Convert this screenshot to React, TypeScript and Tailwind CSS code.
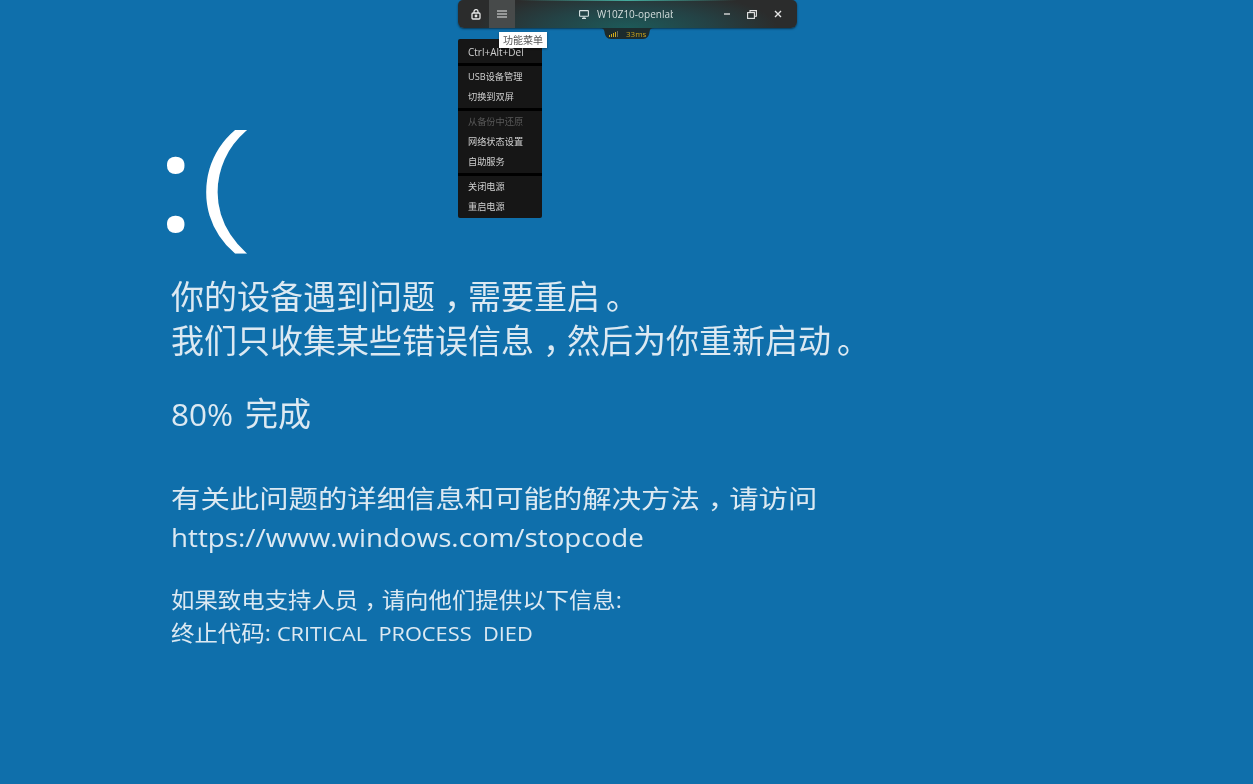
import React from "react";

const cjk = "font-['Open_Sans','Noto_Sans_CJK_SC',sans-serif]";

function Comma() {
  return <span className="inline-block translate-x-[0.27em]">，</span>;
}

function Stop() {
  return <span className="inline-block translate-x-[0.18em]">。</span>;
}

function MenuItem({ label, disabled, latin }: { label: string; disabled?: boolean; latin?: boolean }) {
  return (
    <div className={`h-[20px] pl-[10px] leading-[20px] whitespace-nowrap ${latin ? "text-[10px]" : "text-[9.2px]"} ${disabled ? "text-[#5a5a5a]" : "text-[#d0d0d0]"}`}>
      {label}
    </div>
  );
}

function Sep() {
  return <div className="my-[1px] h-[3px] bg-black" />;
}

function Toolbar() {
  return (
    <div className="absolute left-[458px] top-0 w-[339px]">
      <div className="relative flex h-[28px] items-center rounded-b-[6px] rounded-t-[5px] bg-[radial-gradient(ellipse_150px_38px_at_50%_100%,#1d5a59_0%,#244245_55%,#2b2c2c_100%)] shadow-[0_1px_2px_rgba(0,0,0,0.5)] [filter:blur(0.3px)]">
        <div className="absolute inset-x-[60px] top-0 h-[1px] bg-gradient-to-r from-transparent via-[#45ab9d] to-transparent" />
        <div className="flex h-full w-[31px] items-center justify-center pl-[4px]">
          <svg width="10" height="11" viewBox="0 0 10 11" fill="none" stroke="#e6e6e6" strokeWidth="1.3">
            <path d="M3 4V2.6a2 2 0 0 1 4 0V4" />
            <rect x="1" y="4" width="8" height="6" rx="1" />
            <circle cx="5" cy="7" r="0.8" fill="#e6e6e6" />
          </svg>
        </div>
        <div className="flex h-full w-[26px] items-center justify-center bg-[#474a4a]">
          <svg width="10" height="8" viewBox="0 0 10 8" stroke="#e8e8e8" strokeWidth="1.2">
            <path d="M0 1h10M0 4h10M0 7h10" />
          </svg>
        </div>
        <div className="flex h-full w-[184px] items-center pl-[64px]">
          <svg width="10" height="9" viewBox="0 0 10 9" fill="none" stroke="#d8e4e4" strokeWidth="1.1" className="mr-[8px] shrink-0">
            <rect x="0.6" y="0.6" width="8.8" height="5.6" rx="0.5" />
            <path d="M3 8.4h4M5 6.4v2" />
          </svg>
          <span className="w-[75.5px] overflow-hidden whitespace-nowrap font-['Open_Sans',sans-serif] text-[10px] text-[#d4dedd]">W10Z10-openlab</span>
        </div>
        <div className="flex h-full flex-1 items-center pl-[24px]">
          <svg width="8" height="8" viewBox="0 0 8 8" stroke="#e6e6e6" strokeWidth="1.3"><path d="M1 4h6" /></svg>
          <svg width="10" height="9" viewBox="0 0 10 9" fill="none" stroke="#e6e6e6" strokeWidth="1.1" className="ml-[16px]">
            <rect x="0.6" y="2.6" width="6.8" height="5.8" />
            <path d="M3 2.4V0.6h6.4v5.6H7.6" />
          </svg>
          <svg width="8" height="8" viewBox="0 0 8 8" stroke="#e6e6e6" strokeWidth="1.4" className="ml-[17px]"><path d="M1 1l6 6M7 1L1 7" /></svg>
        </div>
      </div>
      <div className="relative ml-[142px] flex h-[11px] w-[54px] items-center [filter:blur(0.3px)]">
        <svg width="54" height="11" viewBox="0 0 54 11" className="absolute inset-0">
          <path d="M0 0C3 0 4 1 4.500 4C5 8 7 11 11 11H43C47 11 49 8 49.500 4C50 1 51 0 54 0Z" fill="#1c2b2d" />
        </svg>
        <div className="relative ml-[9px] flex h-[6px] items-end gap-[1px]">
          <i className="block h-[2px] w-[1px] bg-[#d2a91c]" />
          <i className="block h-[3px] w-[1px] bg-[#d2a91c]" />
          <i className="block h-[4px] w-[1px] bg-[#d2a91c]" />
          <i className="block h-[5px] w-[1px] bg-[#d2a91c]" />
          <i className="block h-[6px] w-[1px] bg-[#6b6b5a]" />
        </div>
        <span className="relative ml-[8px] font-['Open_Sans',sans-serif] text-[8px] leading-none text-[#c9a21c]">33ms</span>
      </div>
    </div>
  );
}

function Menu() {
  return (
    <div className={`absolute left-[458px] top-[39px] w-[84px] rounded-[2px] bg-[#161616] pt-[3px] pb-[1px] [filter:blur(0.3px)] ${cjk}`}>
      <MenuItem label="Ctrl+Alt+Del" latin />
      <Sep />
      <MenuItem label="USB设备管理" />
      <MenuItem label="切换到双屏" />
      <Sep />
      <MenuItem label="从备份中还原" disabled />
      <MenuItem label="网络状态设置" />
      <MenuItem label="自助服务" />
      <Sep />
      <MenuItem label="关闭电源" />
      <MenuItem label="重启电源" />
    </div>
  );
}

export default function App() {
  return (
    <div className={`relative h-[784px] w-full overflow-hidden bg-[#0f6fab] ${cjk}`}>
      <div className="pl-[171px] pt-[95px] text-[#dce9f2] [filter:blur(0.5px)]">
        <div className="ml-[-15px] flex h-[179px] font-['Open_Sans',sans-serif] text-[125px] font-normal leading-[170px] text-white">
          <span className="inline-block origin-left scale-x-[1.2] scale-y-[1.08]">:</span>
          <span className="ml-[10px] inline-block origin-left scale-x-[1.56] scale-y-[1.12] -translate-y-[2px] font-light [-webkit-text-stroke:1px_white]">(</span>
        </div>
        <p className="text-[33px] leading-[45px] whitespace-nowrap">你的设备遇到问题<Comma />需要重启<Stop /></p>
        <p className="text-[33px] leading-[44px] whitespace-nowrap">我们只收集某些错误信息<Comma />然后为你重新启动<Stop /></p>
        <p className="mt-[29px] text-[33px] leading-[44px]"><span className="text-[31.5px]">80%</span><span className="ml-[12px]">完成</span></p>
        <p className="mt-[44px] origin-left scale-x-[1.157] whitespace-nowrap text-[25.4px] leading-[36px]">有关此问题的详细信息和可能的解决方法<Comma />请访问</p>
        <p className="mt-[2px] origin-left scale-x-[1.11] whitespace-nowrap text-[25px] leading-[38px]">https://www.windows.com/stopcode</p>
        <p className="mt-[27px] origin-left scale-x-[1.084] whitespace-nowrap text-[21.6px] leading-[33px]">如果致电支持人员<Comma />请向他们提供以下信息:</p>
        <p className="origin-left scale-x-[1.084] whitespace-nowrap text-[21.6px] leading-[33px]">终止代码: <span className="text-[20.1px]">CRITICAL&nbsp;&nbsp;PROCESS&nbsp;&nbsp;DIED</span></p>
      </div>
      <Toolbar />
      <Menu />
      <div className={`absolute left-[499px] top-[32px] h-[16px] w-[48px] bg-white text-center text-[10px] leading-[16px] text-[#555] shadow-[0_1px_2px_rgba(0,0,0,0.4)] [filter:blur(0.2px)] ${cjk}`}>功能菜单</div>
    </div>
  );
}
